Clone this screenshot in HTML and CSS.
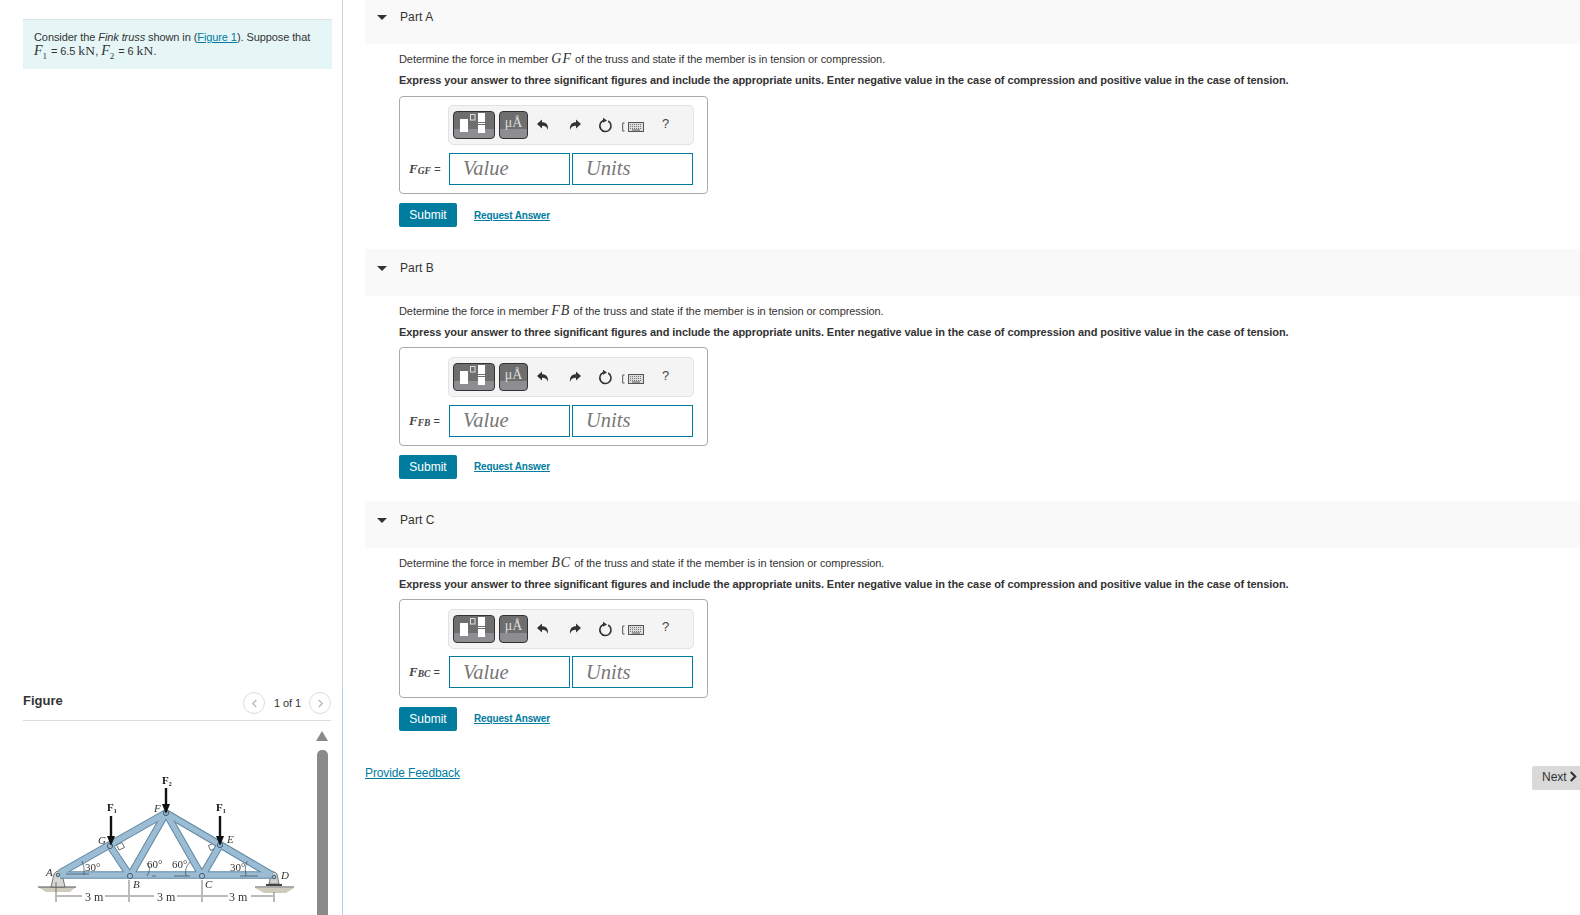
FILE: index.html
```html
<!DOCTYPE html>
<html lang="en">
<head>
	<title>Fink truss</title>
	<meta charset="utf-8">
	<link rel="stylesheet" href="styles.css">
</head>
<body>
	<svg class="defs" width="0" height="0">
		<symbol id="tplIcon" viewBox="0 0 41 27">
			<rect x="6" y="7" width="8" height="13" fill="#fff"/>
			<rect x="16.5" y="2.5" width="4.5" height="5.5" fill="none" stroke="#ddd" stroke-width="1"/>
			<rect x="24" y="1" width="7" height="9" fill="#fff"/>
			<rect x="24" y="11" width="7" height="1" fill="#fff"/>
			<rect x="24" y="13" width="7" height="8" fill="#fff"/>
		</symbol>
		<symbol id="undoIcon" viewBox="0 0 14 14">
			<path d="M1 6 L6 1.5 L6 4.2 C10 4.2 12.6 6.6 12 12 C11 9 9.5 7.8 6 7.8 L6 10.5 Z" fill="#333"/>
		</symbol>
		<symbol id="redoIcon" viewBox="0 0 14 14">
			<path d="M13 6 L8 1.5 L8 4.2 C4 4.2 1.4 6.6 2 12 C3 9 4.5 7.8 8 7.8 L8 10.5 Z" fill="#333"/>
		</symbol>
		<symbol id="resetIcon" viewBox="0 0 16 16">
			<path d="M11.2 4 A5.6 5.6 0 1 1 6.5 3.6" fill="none" stroke="#333" stroke-width="1.6"/>
			<path d="M6 0.8 L10 3.4 L6 5.8 Z" fill="#333"/>
		</symbol>
		<symbol id="kbdIcon" viewBox="0 0 22 10">
			<path d="M2.5 1 H0.7 V9 H2.5" fill="none" stroke="#555" stroke-width="1"/>
			<rect x="6.5" y="0.5" width="15" height="9" fill="#ddd" stroke="#555" stroke-width="1"/>
			<path d="M8 2.5 H20 M8 4.5 H20 M8 6.5 H20" stroke="#777" stroke-width="1" stroke-dasharray="1 1"/>
			<path d="M10 8 H18" stroke="#555" stroke-width="1"/>
		</symbol>
	</svg>

	<div class="page">
		<aside class="side">
			<section class="problem">
				Consider the <i>Fink truss</i> shown in (<a href="#">Figure 1</a>). Suppose that<br>
				<span class="math">F<sub>1</sub></span> = 6.5 <span class="mathUp">kN</span>, <span class="math">F<sub>2</sub></span> = 6 <span class="mathUp">kN</span>.
			</section>

			<section class="figure">
				<div class="figureHead">
					<h2>Figure</h2>
					<div class="pager">
						<span class="pagerBtn"><svg viewBox="0 0 8 10" width="7" height="9"><path d="M6 1 L2 5 L6 9" fill="none" stroke="#bbb" stroke-width="1.6"/></svg></span>
						<span class="pagerText">1 of 1</span>
						<span class="pagerBtn"><svg viewBox="0 0 8 10" width="7" height="9"><path d="M2 1 L6 5 L2 9" fill="none" stroke="#bbb" stroke-width="1.6"/></svg></span>
					</div>
				</div>
				<div class="figureBody">
					<svg class="truss" viewBox="23 721 290 194" width="290" height="194">
						<!-- supports -->
						<path d="M38 887 H76 L70 892 H46 Z" fill="#cfcbbd"/>
						<path d="M38 887 H76" stroke="#555" stroke-width="1"/>
						<path d="M255 888 H294 L286 893 H264 Z" fill="#cfcbbd"/>
						<path d="M255 887 H294" stroke="#555" stroke-width="1"/>
						<path d="M51 887 L54 874 Q58 868 62 874 L65 887 Z" fill="#d6d6d2" stroke="#555" stroke-width="0.8"/>
						<path d="M269 884 L271 874 Q274 870 277 874 L279 884 Z" fill="#cfcfcb" stroke="#555" stroke-width="0.8"/>
						<rect x="266" y="884" width="16" height="2" fill="#444"/>
						<!-- right angle squares -->
						<polygon class="square" points="116.5,845 122,842.5 124.5,847.5 119,850"/>
						<polygon class="square" points="214,843 208.5,845.5 210.5,850.5 216,848"/>
						<!-- bars -->
						<g class="barEdge">
							<line x1="130" y1="876" x2="166" y2="813"/>
							<line x1="166" y1="813" x2="202" y2="876"/>
							<line x1="110" y1="846" x2="130" y2="876"/>
							<line x1="220" y1="845" x2="202" y2="876"/>
							<line x1="60" y1="875" x2="272" y2="875"/>
							<line x1="60" y1="873" x2="166" y2="813"/>
							<line x1="166" y1="813" x2="272" y2="875"/>
						</g>
						<g class="barFill">
							<line x1="130" y1="876" x2="166" y2="813"/>
							<line x1="166" y1="813" x2="202" y2="876"/>
							<line x1="110" y1="846" x2="130" y2="876"/>
							<line x1="220" y1="845" x2="202" y2="876"/>
							<line x1="60" y1="875" x2="272" y2="875"/>
							<line x1="60" y1="873" x2="166" y2="813"/>
							<line x1="166" y1="813" x2="272" y2="875"/>
						</g>
						<!-- joints -->
						<g class="joint">
							<circle cx="110" cy="846" r="2.6"/>
							<circle cx="130" cy="876" r="2.6"/>
							<circle cx="166" cy="813" r="2.6"/>
							<circle cx="202" cy="876" r="2.6"/>
							<circle cx="220" cy="845" r="2.6"/>
							<circle cx="58" cy="875" r="1.8"/>
							<circle cx="274" cy="877" r="1.8"/>
						</g>
						<!-- angle marks -->
						<g class="thin">
							<path d="M82 861 Q85 867 84 875"/>
							<path d="M147 863 Q152 868 147 876"/>
							<path d="M190 862 Q184 868 186 876"/>
							<path d="M247 861 Q244 868 246 876"/>
							<path d="M66 874 H89 M152 876 H156 M174 876 H190 M240 876 H258"/>
						</g>
						<!-- dimensions -->
						<g class="dim">
							<path d="M56 882 V902 M129 880 V902 M202 880 V902 M274 892 V902"/>
							<path d="M57 896 H82 M105 896 H128 M130 896 H154 M177 896 H201 M203 896 H228 M251 896 H273"/>
						</g>
						<!-- loads -->
						<g class="load">
							<line x1="111" y1="816" x2="111" y2="838"/>
							<line x1="166" y1="788" x2="166" y2="806"/>
							<line x1="220" y1="816" x2="220" y2="838"/>
						</g>
						<path d="M107 836 H115 L111 846 Z M162 804 H170 L166 814 Z M216 836 H224 L220 846 Z" fill="#111"/>
						<g class="tlabel">
							<text class="tb" x="107" y="811">F<tspan class="tsub" dy="2">1</tspan></text>
							<text class="tb" x="162" y="784">F<tspan class="tsub" dy="2">2</tspan></text>
							<text class="tb" x="216" y="811">F<tspan class="tsub" dy="2">1</tspan></text>
							<text class="ti" x="154" y="812">F</text>
							<text class="ti" x="98" y="844">G</text>
							<text class="ti" x="227" y="843">E</text>
							<text class="ti" x="46" y="876">A</text>
							<text class="ti" x="133" y="888">B</text>
							<text class="ti" x="205" y="888">C</text>
							<text class="ti" x="281" y="879">D</text>
							<text x="85" y="871">30°</text>
							<text x="147" y="868">60°</text>
							<text x="172" y="868">60°</text>
							<text x="230" y="871">30°</text>
							<text class="tm" x="85" y="901">3 m</text>
							<text class="tm" x="157" y="901">3 m</text>
							<text class="tm" x="229" y="901">3 m</text>
						</g>
					</svg>
					<div class="scroller">
						<span class="scrollUp"></span>
						<span class="scrollThumb"></span>
					</div>
				</div>
			</section>
		</aside>

		<main class="main">
			<section class="part">
				<header class="partHead"><span class="caret"></span>Part A</header>
				<div class="partBody">
					<p class="question">Determine the force in member <span class="math big">GF</span> of the truss and state if the member is in tension or compression.</p>
					<p class="instr">Express your answer to three significant figures and include the appropriate units. Enter negative value in the case of compression and positive value in the case of tension.</p>
					<div class="answer">
						<div class="toolbar">
							<button class="tplBtn"><svg width="41" height="27"><use href="#tplIcon"/></svg></button>
							<button class="symBtn">μÅ</button>
							<svg class="tool toolUndo" width="14" height="14"><use href="#undoIcon"/></svg>
							<svg class="tool toolRedo" width="14" height="14"><use href="#redoIcon"/></svg>
							<svg class="tool toolReset" width="16" height="16"><use href="#resetIcon"/></svg>
							<svg class="tool toolKbd" width="22" height="10"><use href="#kbdIcon"/></svg>
							<span class="help">?</span>
						</div>
						<div class="inputRow">
							<label class="varLabel"><i>F<sub>GF</sub></i> <span>=</span></label>
							<input class="field" type="text" placeholder="Value">
							<input class="field" type="text" placeholder="Units">
						</div>
					</div>
					<div class="actions">
						<button class="submit">Submit</button>
						<a class="request" href="#">Request Answer</a>
					</div>
				</div>
			</section>

			<section class="part">
				<header class="partHead"><span class="caret"></span>Part B</header>
				<div class="partBody">
					<p class="question">Determine the force in member <span class="math big">FB</span> of the truss and state if the member is in tension or compression.</p>
					<p class="instr">Express your answer to three significant figures and include the appropriate units. Enter negative value in the case of compression and positive value in the case of tension.</p>
					<div class="answer">
						<div class="toolbar">
							<button class="tplBtn"><svg width="41" height="27"><use href="#tplIcon"/></svg></button>
							<button class="symBtn">μÅ</button>
							<svg class="tool toolUndo" width="14" height="14"><use href="#undoIcon"/></svg>
							<svg class="tool toolRedo" width="14" height="14"><use href="#redoIcon"/></svg>
							<svg class="tool toolReset" width="16" height="16"><use href="#resetIcon"/></svg>
							<svg class="tool toolKbd" width="22" height="10"><use href="#kbdIcon"/></svg>
							<span class="help">?</span>
						</div>
						<div class="inputRow">
							<label class="varLabel"><i>F<sub>FB</sub></i> <span>=</span></label>
							<input class="field" type="text" placeholder="Value">
							<input class="field" type="text" placeholder="Units">
						</div>
					</div>
					<div class="actions">
						<button class="submit">Submit</button>
						<a class="request" href="#">Request Answer</a>
					</div>
				</div>
			</section>

			<section class="part">
				<header class="partHead"><span class="caret"></span>Part C</header>
				<div class="partBody">
					<p class="question">Determine the force in member <span class="math big">BC</span> of the truss and state if the member is in tension or compression.</p>
					<p class="instr">Express your answer to three significant figures and include the appropriate units. Enter negative value in the case of compression and positive value in the case of tension.</p>
					<div class="answer">
						<div class="toolbar">
							<button class="tplBtn"><svg width="41" height="27"><use href="#tplIcon"/></svg></button>
							<button class="symBtn">μÅ</button>
							<svg class="tool toolUndo" width="14" height="14"><use href="#undoIcon"/></svg>
							<svg class="tool toolRedo" width="14" height="14"><use href="#redoIcon"/></svg>
							<svg class="tool toolReset" width="16" height="16"><use href="#resetIcon"/></svg>
							<svg class="tool toolKbd" width="22" height="10"><use href="#kbdIcon"/></svg>
							<span class="help">?</span>
						</div>
						<div class="inputRow">
							<label class="varLabel"><i>F<sub>BC</sub></i> <span>=</span></label>
							<input class="field" type="text" placeholder="Value">
							<input class="field" type="text" placeholder="Units">
						</div>
					</div>
					<div class="actions">
						<button class="submit">Submit</button>
						<a class="request" href="#">Request Answer</a>
					</div>
				</div>
			</section>

			<div class="footRow">
				<a class="feedback" href="#">Provide Feedback</a>
				<button class="next">Next<svg viewBox="0 0 9 12" width="8" height="11"><path d="M2 1 L7 6 L2 11" fill="none" stroke="#333" stroke-width="2.4"/></svg></button>
			</div>
		</main>
	</div>
</body>
</html>
```

FILE: styles.css
```css
html, body{ width:100%; height:100%; margin:0; overflow:hidden; font-family:"Liberation Sans", Arial, sans-serif; font-size:11px; color:#333; background:#fff; }
a{ color:#007c9e; }
p{ margin:0; }
button{ font-family:inherit; cursor:pointer; }
.defs{ position:absolute; }

.page{ display:flex; height:915px; }

/* left column */
.side{ width:342px; flex:none; height:915px; display:flex; flex-direction:column; border-right:1px solid #c9d6e2; }
.problem{ box-sizing:border-box; margin:19px 0 0 23px; width:309px; height:50px; padding:10px 0 0 11px; line-height:14px; background:#e6f6f7; border-top:1px solid #d6e4e8; font-size:11px; letter-spacing:-0.09px; }
.math{ font-family:"Liberation Serif", serif; font-style:italic; font-size:14px; letter-spacing:0; }
.math sub{ font-size:9px; font-style:normal; line-height:0; }
.problem .math{ margin-right:1px; }
.math.big{ font-size:14px; letter-spacing:1px; }
.mathUp{ font-family:"Liberation Serif", serif; font-size:13.5px; letter-spacing:0.2px; }

.figure{ margin-top:auto; height:227px; overflow:hidden; border-right:1px solid #b6cfe4; margin-right:-1px; display:flex; flex-direction:column; }
.figureHead{ margin-left:23px; width:308px; height:32px; flex:none; display:flex; justify-content:space-between; border-bottom:1px solid #ddd; }
.figureHead h2{ margin:0; font-size:13px; line-height:15px; padding-top:5px; color:#333; }
.pager{ display:flex; align-items:center; height:22px; margin-top:4px; }
.pagerBtn{ width:20px; height:20px; border:1px solid #ddd; border-radius:50%; display:flex; align-items:center; justify-content:center; }
.pagerText{ margin:0 8px 0 9px; font-size:11px; letter-spacing:-0.1px; }
.figureBody{ display:flex; padding-left:23px; }
.truss{ flex:none; filter:blur(0.4px); }
.scroller{ display:flex; flex-direction:column; align-items:center; width:12px; margin-left:3px; padding-top:10px; }
.scrollUp{ width:0; height:0; border-left:6px solid transparent; border-right:6px solid transparent; border-bottom:10px solid #8a8a8a; }
.scrollThumb{ width:11px; height:180px; margin-top:9px; background:#8a8a8a; border-radius:5px 5px 0 0; }

.square{ fill:#fff; stroke:#444; stroke-width:0.8; }
.barEdge line{ stroke:#5f87a3; stroke-width:7.5; }
.barFill line{ stroke:#9bbcd3; stroke-width:5.5; }
.joint circle{ fill:#9fbdd0; stroke:#3e5f76; stroke-width:1; }
.thin path{ fill:none; stroke:#3a4a55; stroke-width:0.7; }
.dim path{ fill:none; stroke:#666; stroke-width:0.9; }
.load line{ stroke:#111; stroke-width:2.4; }
.tlabel text{ font-family:"Liberation Serif", serif; font-size:11px; fill:#333; }
.tlabel .tb{ font-weight:bold; fill:#111; }
.tlabel .ti{ font-style:italic; font-size:11px; }
.tlabel .tm{ font-size:12px; }
.tlabel .tsub{ font-size:6px; }

/* right column */
.main{ flex:1; min-width:0; margin-top:-2.6px; padding-left:22px; }
.part{ margin-bottom:21.9px; }
.partHead{ height:47px; background:#f9f9f9; display:flex; align-items:flex-start; padding-top:12px; box-sizing:border-box; font-size:12px; line-height:15px; letter-spacing:0.1px; color:#333; }
.part:first-child .partHead{ padding-top:13px; }
.caret{ width:0; height:0; margin:5px 13px 0 12px; border-left:5px solid transparent; border-right:5px solid transparent; border-top:5px solid #333; }
.partBody{ padding-left:34px; }
.question{ margin-top:7px; line-height:16px; font-size:11px; letter-spacing:-0.08px; }
.instr{ margin-top:5px; line-height:16px; font-size:11px; font-weight:bold; letter-spacing:-0.08px; }

.answer{ box-sizing:border-box; width:309px; height:98.6px; margin-top:7.4px; border:1px solid #aaa; border-radius:4px; padding:8.6px 0 0 48px; }
.toolbar{ box-sizing:border-box; width:246px; height:40px; display:flex; align-items:center; padding-left:4px; background:#f4f4f4; border:1px solid #e2e2e2; border-radius:5px; }
.tplBtn, .symBtn{ height:28px; padding:0; border:1px solid #333; border-radius:4px; background:linear-gradient(#6e6e6e 0, #6e6e6e 66%, #8e8e92 66%, #8e8e92 100%); }
.tplBtn{ width:42px; }
.tplBtn svg{ display:block; }
.symBtn{ width:29px; margin-left:4px; color:#ddd; font-family:"Liberation Serif", serif; font-size:14px; line-height:20px; padding-bottom:5px; }
.tool{ flex:none; }
.toolUndo{ margin-left:8px; }
.toolRedo{ margin-left:18px; }
.toolReset{ margin-left:15px; }
.toolKbd{ margin-left:9px; margin-top:3px; }
.help{ margin-left:18px; font-size:13px; color:#444; margin-top:-4px; }

.inputRow{ display:flex; align-items:center; margin:7.6px 0 0 -39px; }
.varLabel{ width:40px; flex:none; font-family:"Liberation Serif", serif; font-size:13px; font-weight:bold; color:#444; white-space:nowrap; }
.varLabel sub{ font-size:9.5px; line-height:0; vertical-align:-1px; }
.varLabel span{ font-family:"Liberation Sans", sans-serif; font-size:11px; font-weight:normal; }
.field{ box-sizing:border-box; width:121px; height:32px; margin-right:2px; padding:0 13px; border:1px solid #007c9e; border-radius:0; outline:none; background:#fff; font-family:"Liberation Serif", serif; font-style:italic; font-size:20.5px; }
.field::placeholder{ color:#777; opacity:1; }

.actions{ display:flex; align-items:center; margin-top:8.8px; }
.submit{ width:58px; height:24px; padding:0; border:0; border-radius:2px; background:#007c9e; color:#fff; font-size:12px; }
.request{ margin-left:17px; font-size:10px; font-weight:bold; letter-spacing:-0.15px; }

.footRow{ display:flex; justify-content:space-between; align-items:flex-start; margin-top:35.4px; }
.feedback{ font-size:12px; line-height:14px; letter-spacing:-0.12px; }
.next{ display:flex; align-items:center; gap:2px; height:24px; width:48px; padding:0 0 2px 10px; border:0; border-radius:2px 0 0 2px; background:#d9d9d9; color:#333; font-size:12px; }
```
